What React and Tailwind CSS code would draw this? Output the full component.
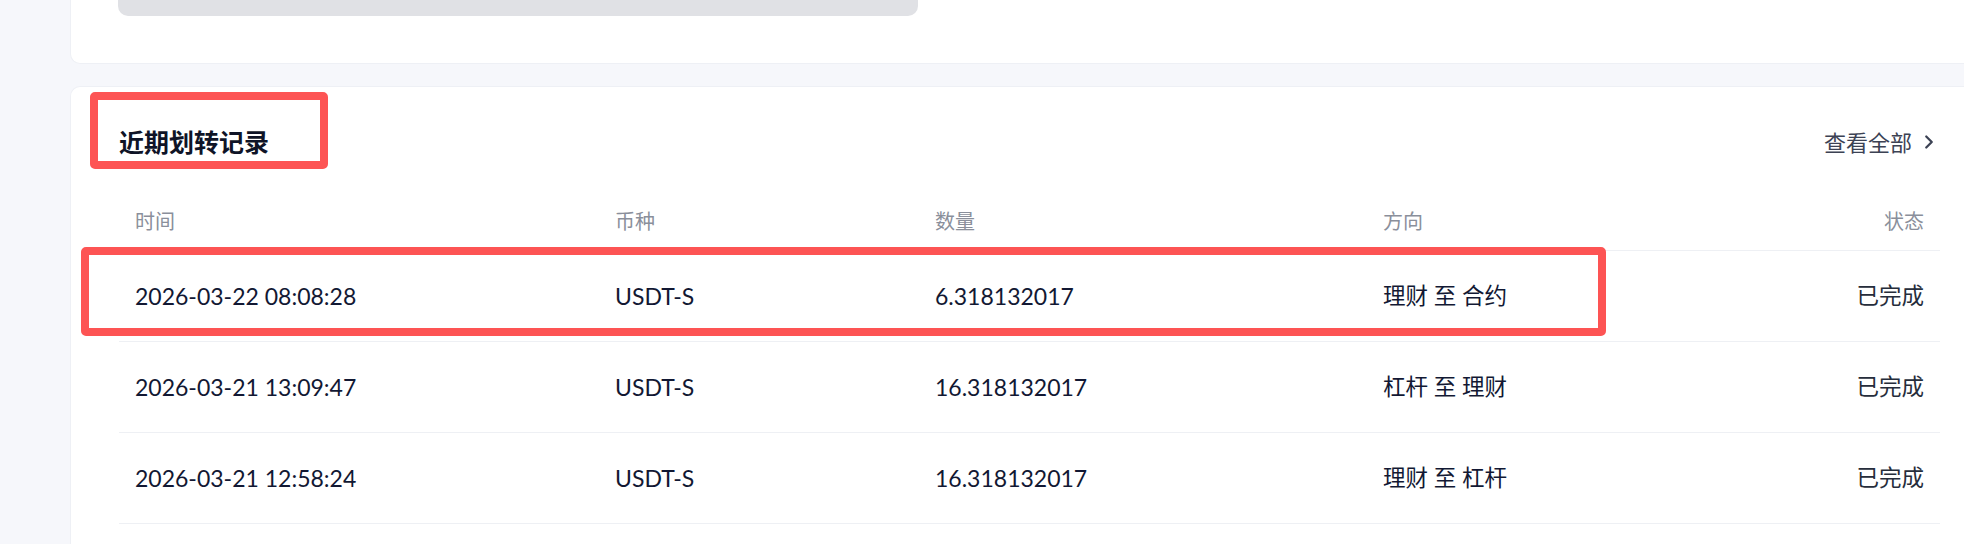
import { ChevronRight } from "lucide-react";

const rows = [
  { time: "2026-03-22 08:08:28", coin: "USDT-S", amount: "6.318132017", dir: "理财 至 合约", status: "已完成" },
  { time: "2026-03-21 13:09:47", coin: "USDT-S", amount: "16.318132017", dir: "杠杆 至 理财", status: "已完成" },
  { time: "2026-03-21 12:58:24", coin: "USDT-S", amount: "16.318132017", dir: "理财 至 杠杆", status: "已完成" },
];

const font = { fontFamily: 'Lato, "Noto Sans CJK SC", sans-serif' };

function TransferRecords() {
  return (
    <div className="relative mt-[22px] bg-white border border-r-0 border-[#eef0f5] rounded-l-[10px] pt-[36px] pl-[48px] pr-[24px] pb-10">
      <div className="flex items-center justify-between h-[38px]">
        <h2 className="text-[25px] font-bold text-[#0f1427] leading-none">近期划转记录</h2>
        <div className="flex items-center gap-[6px] text-[22px] text-[#3c4254]">
          <span>查看全部</span>
          <ChevronRight size={22} strokeWidth={2.5} />
        </div>
      </div>

      <div className="mt-[30px]">
        <div className="grid grid-cols-[480px_320px_448px_1fr] h-[60px] items-center border-b border-[#eef0f4] text-[20px] text-[#8a8f9b]">
          <div className="px-4">时间</div>
          <div className="px-4">币种</div>
          <div className="px-4">数量</div>
          <div className="px-4 flex justify-between">
            <span>方向</span>
            <span>状态</span>
          </div>
        </div>
        {rows.map((r) => (
          <div
            key={r.time}
            className="grid grid-cols-[480px_320px_448px_1fr] h-[91px] items-center border-b border-[#eef0f4] text-[23px] text-[#121833]"
          >
            <div className="px-4">{r.time}</div>
            <div className="px-4">{r.coin}</div>
            <div className="px-4">{r.amount}</div>
            <div className="px-4 flex justify-between">
              <span className="text-[22.5px]">{r.dir}</span>
              <span className="text-[22.5px] text-[#262d3b]">{r.status}</span>
            </div>
          </div>
        ))}
      </div>

      {/* annotation boxes */}
      <div className="absolute left-[19px] top-[5px] w-[238px] h-[77px] border-[8px] border-[#fd5454] rounded-[5px]" />
      <div className="absolute left-[10px] top-[160px] w-[1525px] h-[89px] border-[8px] border-[#fd5454] rounded-[5px]" />
    </div>
  );
}

export default function App() {
  return (
    <div className="min-h-screen bg-[#f6f7fb] pl-[70px] overflow-hidden" style={font}>
      <div className="h-[64px] bg-white border border-t-0 border-r-0 border-[#eef0f5] rounded-bl-[10px] pl-[47px]">
        <div className="h-[16px] w-[800px] bg-[#e0e1e5] rounded-b-[10px]" />
      </div>
      <TransferRecords />
    </div>
  );
}
